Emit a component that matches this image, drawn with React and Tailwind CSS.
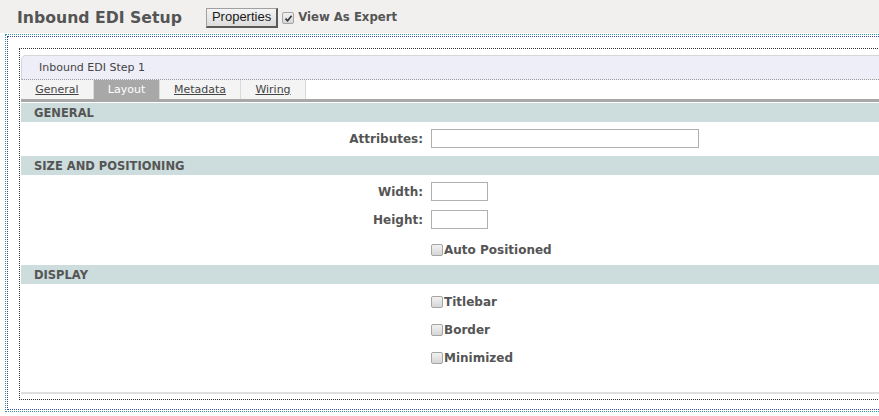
import { useState } from "react";

const TABS = [
  { label: "General", width: "w-[73px]" },
  { label: "Layout", width: "w-[66px]" },
  { label: "Metadata", width: "w-[81px]" },
  { label: "Wiring", width: "w-[65px]" },
];

function Box({ checked = false }) {
  return (
    <span className="inline-flex items-center justify-center w-[12px] h-[12px] shrink-0 rounded-[2px] border border-[#a4a4a4] bg-gradient-to-b from-[#f2f2f2] to-[#d6d6d6]">
      {checked && (
        <svg width="9" height="9" viewBox="0 0 9 9">
          <path d="M1.5 4.6 L3.6 6.8 L7.6 1.8" fill="none" stroke="#333" strokeWidth="1.6" />
        </svg>
      )}
    </span>
  );
}

function Band({ children }) {
  return (
    <div className="h-[19px] bg-[#cddcdc] pl-[13px] pt-[2px] flex items-center text-[11.5px] font-bold text-[#555]">
      {children}
    </div>
  );
}

function Row({ label, children, className = "" }) {
  return (
    <div className={`flex items-center gap-[8px] ${className}`}>
      <div className="w-[402px] text-right text-[12px] font-bold text-[#555]">{label}</div>
      {children}
    </div>
  );
}

function CheckRow({ label, className = "" }) {
  return (
    <div className={`flex items-center h-[12px] pl-[410px] ${className}`}>
      <Box />
      <span className="ml-px text-[12px] font-bold text-[#555] leading-none">{label}</span>
    </div>
  );
}

export default function App() {
  const [tab] = useState("Layout");

  return (
    <div className="w-[879px] h-[416px] overflow-hidden bg-white font-['DejaVu_Sans',Verdana,sans-serif]">
      {/* Header */}
      <div className="h-[33px] bg-[#f1f0ee] flex items-center pl-[17px] pt-[2px]">
        <h1 className="text-[15.7px] font-bold text-[#555]">Inbound EDI Setup</h1>
        <button className="ml-[24px] h-[20px] px-[5px] flex items-center bg-gradient-to-b from-[#f4f4f4] to-[#dcdcdc] border border-[#a0a0a0] border-r-2 border-b-2 border-r-[#5a5a5a] border-b-[#5a5a5a] font-['Liberation_Sans',Arial,sans-serif] text-[13px] text-[#1a1a1a]">
          Properties
        </button>
        <span className="ml-[4px]">
          <Box checked />
        </span>
        <span className="ml-[4px] text-[11.7px] font-bold text-[#555]">View As Expert</span>
      </div>

      {/* Outer double dotted frame */}
      <div className="mt-px ml-[5px] w-[920px] border border-dotted border-[#2f9a9a] p-px">
        <div className="border border-dotted border-[#3c48a8] pt-[11px] pl-[11px] pb-[9px]">
          <div className="border border-dotted border-[#333] pt-[6px] pb-[5px] pl-px">
            <div className="border-b-2 border-[#dedede]">
              {/* Title bar */}
              <div className="h-[25px] bg-[#eeeef8] border-t border-l border-[#d6d6d6] rounded-tl-[5px] border-b border-b-[#999] [border-bottom-style:dotted] pl-[17px] pt-[2px] flex items-center text-[11px] text-[#444]">
                Inbound EDI Step 1
              </div>

              {/* Tabs */}
              <div className="flex h-[19px]">
                {TABS.map((t) => (
                  <div
                    key={t.label}
                    className={`${t.width} flex items-center justify-center pt-[2px] text-[11px] border-r border-[#dadada] ${
                      t.label === tab
                        ? "bg-[#a8a8a8] text-white"
                        : "bg-[#f4f4f4] text-[#444] underline"
                    }`}
                  >
                    {t.label}
                  </div>
                ))}
              </div>
              <div className="h-[3px] bg-[#a8a8a8]" />

              <div className="mt-px">
                <Band>GENERAL</Band>
                <div className="pt-[7px] pb-[8px]">
                  <Row label="Attributes:">
                    <input className="w-[268px] h-[19px] border border-[#b0b0b0] bg-white outline-none" />
                  </Row>
                </div>

                <Band>SIZE AND POSITIONING</Band>
                <div className="pt-[7px] pb-[9px]">
                  <Row label="Width:">
                    <input className="w-[57px] h-[19px] border border-[#b0b0b0] bg-white outline-none" />
                  </Row>
                  <Row label="Height:" className="mt-[9px]">
                    <input className="w-[57px] h-[19px] border border-[#b0b0b0] bg-white outline-none" />
                  </Row>
                  <CheckRow label="Auto Positioned" className="mt-[14px] h-[13px]" />
                </div>

                <Band>DISPLAY</Band>
                <div className="pt-[12px] pb-[28px]">
                  <CheckRow label="Titlebar" />
                  <CheckRow label="Border" className="mt-[16px]" />
                  <CheckRow label="Minimized" className="mt-[16px]" />
                </div>
              </div>
            </div>
          </div>
        </div>
      </div>
    </div>
  );
}
